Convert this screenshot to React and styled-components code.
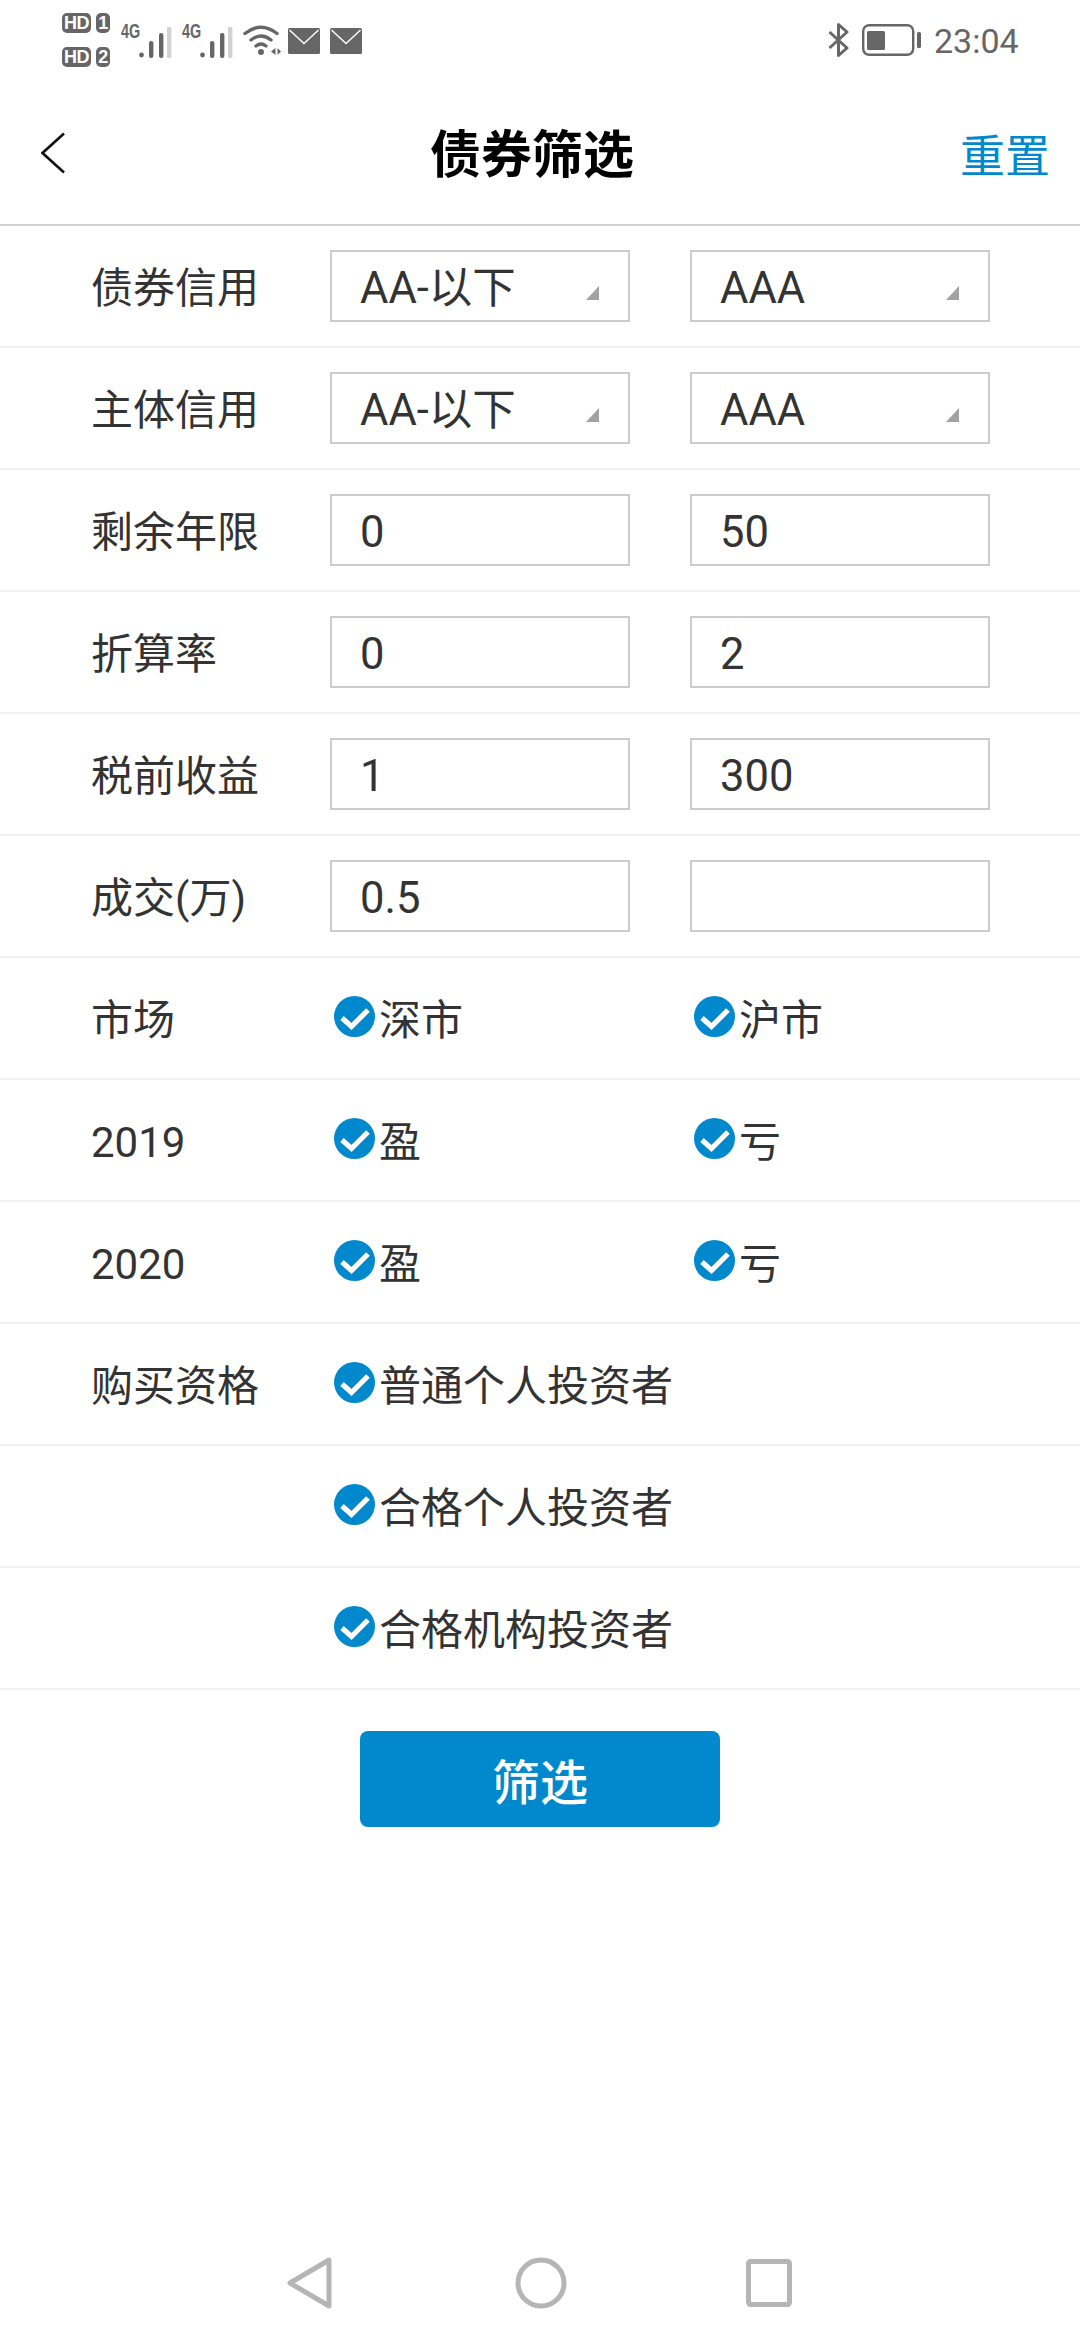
import styled, { createGlobalStyle } from "styled-components";

const GlobalStyle = createGlobalStyle`
  html, body {
    margin: 0;
    padding: 0;
    background: #fff;
  }
  * {
    box-sizing: border-box;
  }
`;

const Page = styled.div`
  width: 1080px;
  height: 2340px;
  display: flex;
  flex-direction: column;
  background: #fff;
  color: #333;
  font-family: Roboto, "Noto Sans CJK SC", sans-serif;
  overflow: hidden;
`;

const StatusBar = styled.div`
  height: 76px;
  padding: 13px 62px 0;
  display: flex;
  justify-content: space-between;
  align-items: flex-start;
  color: #666;
`;

const StatusGroup = styled.div`
  display: flex;
  align-items: flex-start;
`;

const SimStack = styled.div`
  display: flex;
  flex-direction: column;
  gap: 14px;
`;

const SimRow = styled.div`
  display: flex;
  gap: 5px;
`;

const SimBadge = styled.span`
  height: 20px;
  width: ${({ $wide }) => ($wide ? "29px" : "14px")};
  border-radius: 5px;
  background: #666;
  color: #fff;
  font: 700 18px/20px "Liberation Sans", sans-serif;
  letter-spacing: -0.5px;
  text-align: center;
`;

const Network = styled.div`
  margin: 11px 0 0 ${({ $left }) => $left}px;
  display: flex;
  align-items: flex-start;
`;

const NetworkLabel = styled.span`
  width: 18px;
  font: 700 20px/15px "Liberation Sans", sans-serif;
  color: #666;
  transform: scaleX(0.72);
  transform-origin: left center;
  white-space: nowrap;
`;

const StatusIcon = styled.svg`
  display: block;
  flex: none;
  margin-left: ${({ $left }) => $left || 0}px;
  margin-top: ${({ $top }) => $top || 0}px;
`;

const Clock = styled.span`
  margin: 11px 0 0 13px;
  font-size: 34px;
  line-height: 34px;
  width: 84px;
  white-space: nowrap;
`;

const Header = styled.header`
  height: 150px;
  display: grid;
  grid-template-columns: 1fr auto 1fr;
  align-items: center;
  border-bottom: 2px solid #d2d2d2;
`;

const BackButton = styled.div`
  padding: 6px 0 0 41px;
  display: flex;
`;

const Title = styled.h1`
  margin: 12px 16px 0 0;
  font-size: 51px;
  line-height: 60px;
  font-weight: 700;
  color: #000;
`;

const ResetLink = styled.span`
  justify-self: end;
  padding: 6px 30px 0 0;
  font-size: 45px;
  color: #0288cc;
`;

const Row = styled.div`
  height: 122px;
  padding-left: 91px;
  display: grid;
  grid-template-columns: 239px 360px 300px;
  align-items: center;
  border-bottom: 2px solid #f1f1f1;
`;

const Label = styled.span`
  padding-top: 6px;
  font-size: 42px;
  line-height: 50px;
  white-space: nowrap;
`;

const Field = styled.div`
  position: relative;
  width: 300px;
  height: 72px;
  padding: 3px 0 0 28px;
  border: 2px solid #ccc;
  font-size: 43.5px;
  line-height: 68px;
  white-space: nowrap;
`;

const Caret = styled.i`
  position: absolute;
  right: 29px;
  bottom: 20px;
  width: 0;
  height: 0;
  border-style: solid;
  border-width: 0 0 14px 13px;
  border-color: transparent transparent #a2a2a2 transparent;
`;

const Option = styled.span`
  margin-left: 4px;
  display: flex;
  align-items: center;
  gap: 4px;
  font-size: 42px;
  line-height: 50px;
  white-space: nowrap;
`;

const OptionText = styled.span`
  padding-top: 6px;
`;

const CheckIcon = styled.svg`
  display: block;
  flex: none;
  margin-bottom: 4px;
`;

const SubmitWrap = styled.div`
  margin-top: 41px;
  display: flex;
  justify-content: center;
`;

const SubmitButton = styled.button`
  width: 360px;
  height: 96px;
  padding: 0;
  border: none;
  border-radius: 8px;
  background: #0288cc;
  color: #fff;
  font-family: inherit;
  font-size: 48px;
  font-weight: 500;
`;

const NavBar = styled.nav`
  margin-top: auto;
  height: 83px;
  padding-left: 287px;
  display: flex;
  align-items: flex-start;
`;

const SignalBars = () => (
  <StatusIcon width="33" height="31" viewBox="0 0 33 31" $top={3}>
    <circle cx="2.5" cy="28" r="2.4" fill="#666" />
    <rect x="10" y="14" width="4.4" height="17" rx="2" fill="#666" />
    <rect x="20" y="6" width="4.4" height="25" rx="2" fill="#666" />
    <rect x="28" y="0" width="4.4" height="31" rx="1" fill="#d2d2d2" />
  </StatusIcon>
);

const MailIcon = ({ left }) => (
  <StatusIcon width="32" height="26" viewBox="0 0 32 26" $left={left} $top={15}>
    <rect width="32" height="26" rx="1.5" fill="#666" />
    <path d="M1.5 2 L16 15.5 L30.5 2" fill="none" stroke="#fff" strokeWidth="1.4" />
  </StatusIcon>
);

const CheckMark = () => (
  <CheckIcon width="41" height="41" viewBox="0 0 41 41">
    <circle cx="20.5" cy="20.5" r="20.5" fill="#0288cc" />
    <path d="M8 22 L17.5 30.5 L34 14" fill="none" stroke="#fff" strokeWidth="5.2" />
  </CheckIcon>
);

const selectRows = [
  { label: "债券信用", low: "AA-以下", high: "AAA" },
  { label: "主体信用", low: "AA-以下", high: "AAA" },
];

const inputRows = [
  { label: "剩余年限", low: "0", high: "50" },
  { label: "折算率", low: "0", high: "2" },
  { label: "税前收益", low: "1", high: "300" },
  { label: "成交(万)", low: "0.5", high: "" },
];

const checkRows = [
  { label: "市场", options: ["深市", "沪市"] },
  { label: "2019", options: ["盈", "亏"] },
  { label: "2020", options: ["盈", "亏"] },
  { label: "购买资格", options: ["普通个人投资者"] },
  { label: "", options: ["合格个人投资者"] },
  { label: "", options: ["合格机构投资者"] },
];

export default function App() {
  return (
    <Page>
      <GlobalStyle />
      <StatusBar>
        <StatusGroup>
          <SimStack>
            <SimRow>
              <SimBadge $wide>HD</SimBadge>
              <SimBadge>1</SimBadge>
            </SimRow>
            <SimRow>
              <SimBadge $wide>HD</SimBadge>
              <SimBadge>2</SimBadge>
            </SimRow>
          </SimStack>
          <Network $left={11}>
            <NetworkLabel>4G</NetworkLabel>
            <SignalBars />
          </Network>
          <Network $left={10}>
            <NetworkLabel>4G</NetworkLabel>
            <SignalBars />
          </Network>
          <StatusIcon width="38" height="31" viewBox="0 0 38 31" $left={10} $top={11}>
            <g fill="none" stroke="#666" strokeWidth="3.4" strokeLinecap="round">
              <path d="M2 9.5 Q18 -3 34 9.5" />
              <path d="M8 16 Q18 8 28 16" />
              <path d="M13 22 Q18 18 23 22" />
            </g>
            <circle cx="18" cy="28" r="3" fill="#666" />
            <path d="M32.5 24 V31 L28 27.5 Z M34.5 24 V31 L38 27.5 Z" fill="#666" />
          </StatusIcon>
          <MailIcon left={7} />
          <MailIcon left={10} />
        </StatusGroup>
        <StatusGroup>
          <StatusIcon width="21" height="34" viewBox="0 0 21 34" $top={10}>
            <path
              d="M1.5 9 L19 25 L10.5 32.5 V1.5 L19 9 L1.5 25"
              fill="none"
              stroke="#666"
              strokeWidth="3"
              strokeLinejoin="round"
            />
          </StatusIcon>
          <StatusIcon width="59" height="32" viewBox="0 0 59 32" $left={13} $top={11}>
            <rect x="1.2" y="1.2" width="50" height="29.6" rx="6" fill="none" stroke="#666" strokeWidth="2.4" />
            <rect x="5" y="7" width="18" height="19" rx="1.5" fill="#666" />
            <rect x="55" y="8" width="4" height="16" rx="1.5" fill="#666" />
          </StatusIcon>
          <Clock>23:04</Clock>
        </StatusGroup>
      </StatusBar>

      <Header>
        <BackButton>
          <svg width="24" height="42" viewBox="0 0 24 42">
            <path d="M23 1.5 L1.5 21 L23 40.5" fill="none" stroke="#111" strokeWidth="2.6" />
          </svg>
        </BackButton>
        <Title>债券筛选</Title>
        <ResetLink>重置</ResetLink>
      </Header>

      <main>
        {selectRows.map((row) => (
          <Row key={row.label}>
            <Label>{row.label}</Label>
            <Field>
              {row.low}
              <Caret />
            </Field>
            <Field>
              {row.high}
              <Caret />
            </Field>
          </Row>
        ))}
        {inputRows.map((row) => (
          <Row key={row.label}>
            <Label>{row.label}</Label>
            <Field>{row.low}</Field>
            <Field>{row.high}</Field>
          </Row>
        ))}
        {checkRows.map((row, i) => (
          <Row key={i}>
            <Label>{row.label}</Label>
            {row.options.map((option) => (
              <Option key={option}>
                <CheckMark />
                <OptionText>{option}</OptionText>
              </Option>
            ))}
          </Row>
        ))}
      </main>

      <SubmitWrap>
        <SubmitButton>筛选</SubmitButton>
      </SubmitWrap>

      <NavBar>
        <svg width="46" height="52" viewBox="0 0 46 52">
          <path
            d="M42 3 V49 L3 26 Z"
            fill="none"
            stroke="#b5b5b5"
            strokeWidth="5"
            strokeLinejoin="round"
          />
        </svg>
        <StatusIcon width="52" height="52" viewBox="0 0 52 52" $left={182}>
          <circle cx="26" cy="26" r="23" fill="none" stroke="#b5b5b5" strokeWidth="5" />
        </StatusIcon>
        <StatusIcon width="46" height="48" viewBox="0 0 46 48" $left={179} $top={2}>
          <rect x="2.5" y="2.5" width="41" height="43" rx="2" fill="none" stroke="#b5b5b5" strokeWidth="5" />
        </StatusIcon>
      </NavBar>
    </Page>
  );
}
